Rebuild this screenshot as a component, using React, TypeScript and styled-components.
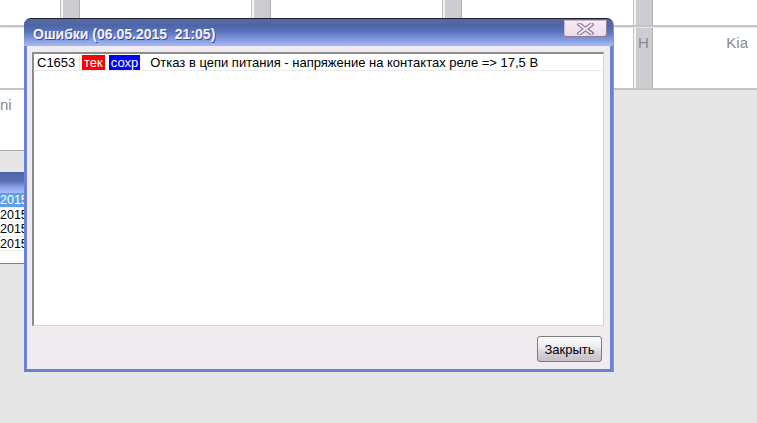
import React from "react";
import styled, { createGlobalStyle } from "styled-components";

const Global = createGlobalStyle`
  html, body { margin: 0; padding: 0; background: #e6e6e6; }
  body { font-family: "Liberation Sans", Arial, sans-serif; }
  * { box-sizing: border-box; }
`;

const Screen = styled.div`
  position: relative;
  width: 757px;
  height: 423px;
  overflow: hidden;
  background: #e6e6e6;
`;

const Backdrop = styled.div`
  display: flex;
  flex-direction: column;
`;

const GridRow = styled.div<{ $h: number; $top?: number }>`
  display: flex;
  height: ${(p) => p.$h}px;
  margin-top: ${(p) => p.$top ?? 0}px;
  border-bottom: 2px solid #c4c4c4;
`;

const Cell = styled.div<{ $w?: number }>`
  ${(p) => (p.$w ? `width: ${p.$w}px; flex: none;` : "flex: 1;")}
  background: #ffffff;
  display: flex;
  justify-content: flex-end;
  padding: 6px 9px 0 0;
  color: #8a8a8a;
  font-size: 15px;
`;

const Bar = styled.div`
  width: 20px;
  flex: none;
  background: #cdccd0;
  border-left: 1px solid #c2c2c2;
  box-shadow: inset 2px 0 0 #f4f4f4;
  border-right: 1px solid #b0b0b0;
  color: #8a8a8a;
  font-size: 15px;
  padding: 6px 0 0 4px;
`;

const NameCell = styled.div`
  width: 300px;
  height: 61px;
  background: #ffffff;
  border-bottom: 1px solid #a8a8a8;
  color: #8a8a8a;
  font-size: 15px;
  padding: 6px 0 0 0;
`;

const SidePanel = styled.div`
  width: 300px;
  margin-top: 21px;
  background: #ffffff;
  border-bottom: 1px solid #808080;
  height: 92px;
`;

const SideHeader = styled.div`
  height: 21px;
  background: linear-gradient(to bottom, #4d63a6 0%, #5b72b8 45%, #8ea4e8 75%, #a9bcf4 100%);
`;

const SideRow = styled.div<{ $sel?: boolean }>`
  height: 14.5px;
  line-height: 14px;
  font-size: 12.5px;
  padding-left: 0;
  color: ${(p) => (p.$sel ? "#ffffff" : "#000000")};
  background: ${(p) => (p.$sel ? "#5c9fe6" : "#ffffff")};
  border-bottom: 1px solid #ececec;
`;

const Dialog = styled.div`
  position: absolute;
  left: 24px;
  top: 18px;
  width: 589px;
  display: flex;
  flex-direction: column;
  background: #6a82cf;
  border-top: 1px solid #1e2030;
  border-radius: 7px 7px 0 0;
  overflow: hidden;
  box-shadow: 1px 0 0 #8a96c8;
`;

const TitleBar = styled.div`
  height: 27px;
  display: flex;
  align-items: center;
  justify-content: space-between;
  padding: 0 6px 0 9px;
  background: linear-gradient(to bottom, #56699f 0%, #4e65a8 25%, #5e76bd 50%, #869ce2 78%, #a6baf4 100%);
`;

const TitleText = styled.span`
  font-family: "Liberation Sans", Arial, sans-serif;
  font-weight: bold;
  font-size: 14px;
  color: #f2f2ff;
  text-shadow: 1px 1px 0 #3c4c88;
  margin-top: 2px;
`;

const CloseButton = styled.div`
  width: 43px;
  height: 17px;
  align-self: flex-start;
  margin-top: 1px;
  background: linear-gradient(to bottom, #f6eaf4, #eedcec);
  border: 1px solid #c8b8d0;
  border-right-color: #8c7c98;
  border-bottom-color: #8c7c98;
  border-radius: 0 0 3px 3px;
  display: flex;
  align-items: center;
  justify-content: center;
`;

const Body = styled.div`
  margin: 0 3px 3px 3px;
  background: #efebef;
  display: flex;
  flex-direction: column;
  padding: 6px 6px 7px 5px;
`;

const ListBox = styled.div`
  height: 274px;
  background: #ffffff;
  border-top: 2px solid #8c8c8c;
  border-left: 2px solid #8c8c8c;
  border-right: 1px solid #d8d4dc;
  border-bottom: 1px solid #d8d4dc;
`;

const ErrorRow = styled.div`
  display: flex;
  align-items: stretch;
  height: 17px;
  padding-top: 1px;
  border-bottom: 1px solid #ebebeb;
  font-size: 13px;
  color: #000000;
`;

const CodeCell = styled.div`
  width: 46px;
  padding-left: 3px;
  border-right: 1px solid #e6e6e6;
  line-height: 15px;
`;

const Badge = styled.span<{ $bg: string }>`
  display: inline-block;
  height: 15px;
  line-height: 15px;
  padding: 0 2px;
  margin-left: ${(p) => (p.$bg === "#ff0000" ? 2 : 4)}px;
  background: ${(p) => p.$bg};
  color: #ffffff;
`;

const Message = styled.span`
  margin-left: 10px;
  line-height: 15px;
  white-space: nowrap;
`;

const Footer = styled.div`
  display: flex;
  justify-content: flex-end;
  padding: 10px 2px 0 0;
`;

const Button = styled.div`
  width: 65px;
  height: 26px;
  border: 1px solid #7c7c84;
  border-radius: 3px;
  background: linear-gradient(to bottom, #fbfbfb 0%, #ededef 40%, #d2cfd6 70%, #c4c0c8 100%);
  display: flex;
  align-items: center;
  justify-content: center;
  font-size: 13px;
  color: #000000;
  padding-top: 1px;
`;

const CloseIcon = () => (
  <svg width="17" height="12" viewBox="0 0 17 12">
    <path d="M2.5 1.5 L14.5 10.5 M14.5 1.5 L2.5 10.5" stroke="#8a7a92" strokeWidth="4.2" strokeLinecap="square" fill="none" />
    <path d="M2.5 1.5 L14.5 10.5 M14.5 1.5 L2.5 10.5" stroke="#f2e4f0" strokeWidth="2" strokeLinecap="square" fill="none" />
  </svg>
);

const topCells = [60, 0, 171, 0, 171, 0, 171, 0];

export default function App() {
  return (
    <Screen>
      <Global />
      <Backdrop>
        <GridRow $h={27}>
          {topCells.map((w, i) => (w ? <Cell key={i} $w={w} /> : <Bar key={i} />))}
          <Cell />
        </GridRow>
        <GridRow $h={62} $top={1}>
          <Cell $w={60} />
          <Bar />
          <Cell $w={171} />
          <Bar />
          <Cell $w={171} />
          <Bar />
          <Cell $w={171} />
          <Bar>H</Bar>
          <Cell>Kia</Cell>
        </GridRow>
        <NameCell>ni</NameCell>
        <SidePanel>
          <SideHeader />
          <SideRow $sel>2015</SideRow>
          <SideRow>2015</SideRow>
          <SideRow>2015</SideRow>
          <SideRow>2015</SideRow>
        </SidePanel>
      </Backdrop>

      <Dialog>
        <TitleBar>
          <TitleText>Ошибки (06.05.2015&nbsp;&nbsp;21:05)</TitleText>
          <CloseButton>
            <CloseIcon />
          </CloseButton>
        </TitleBar>
        <Body>
          <ListBox>
            <ErrorRow>
              <CodeCell>C1653</CodeCell>
              <Badge $bg="#ff0000">тек</Badge>
              <Badge $bg="#0000ff">сохр</Badge>
              <Message>Отказ в цепи питания - напряжение на контактах реле =&gt; 17,5 В</Message>
            </ErrorRow>
          </ListBox>
          <Footer>
            <Button>Закрыть</Button>
          </Footer>
        </Body>
      </Dialog>
    </Screen>
  );
}
